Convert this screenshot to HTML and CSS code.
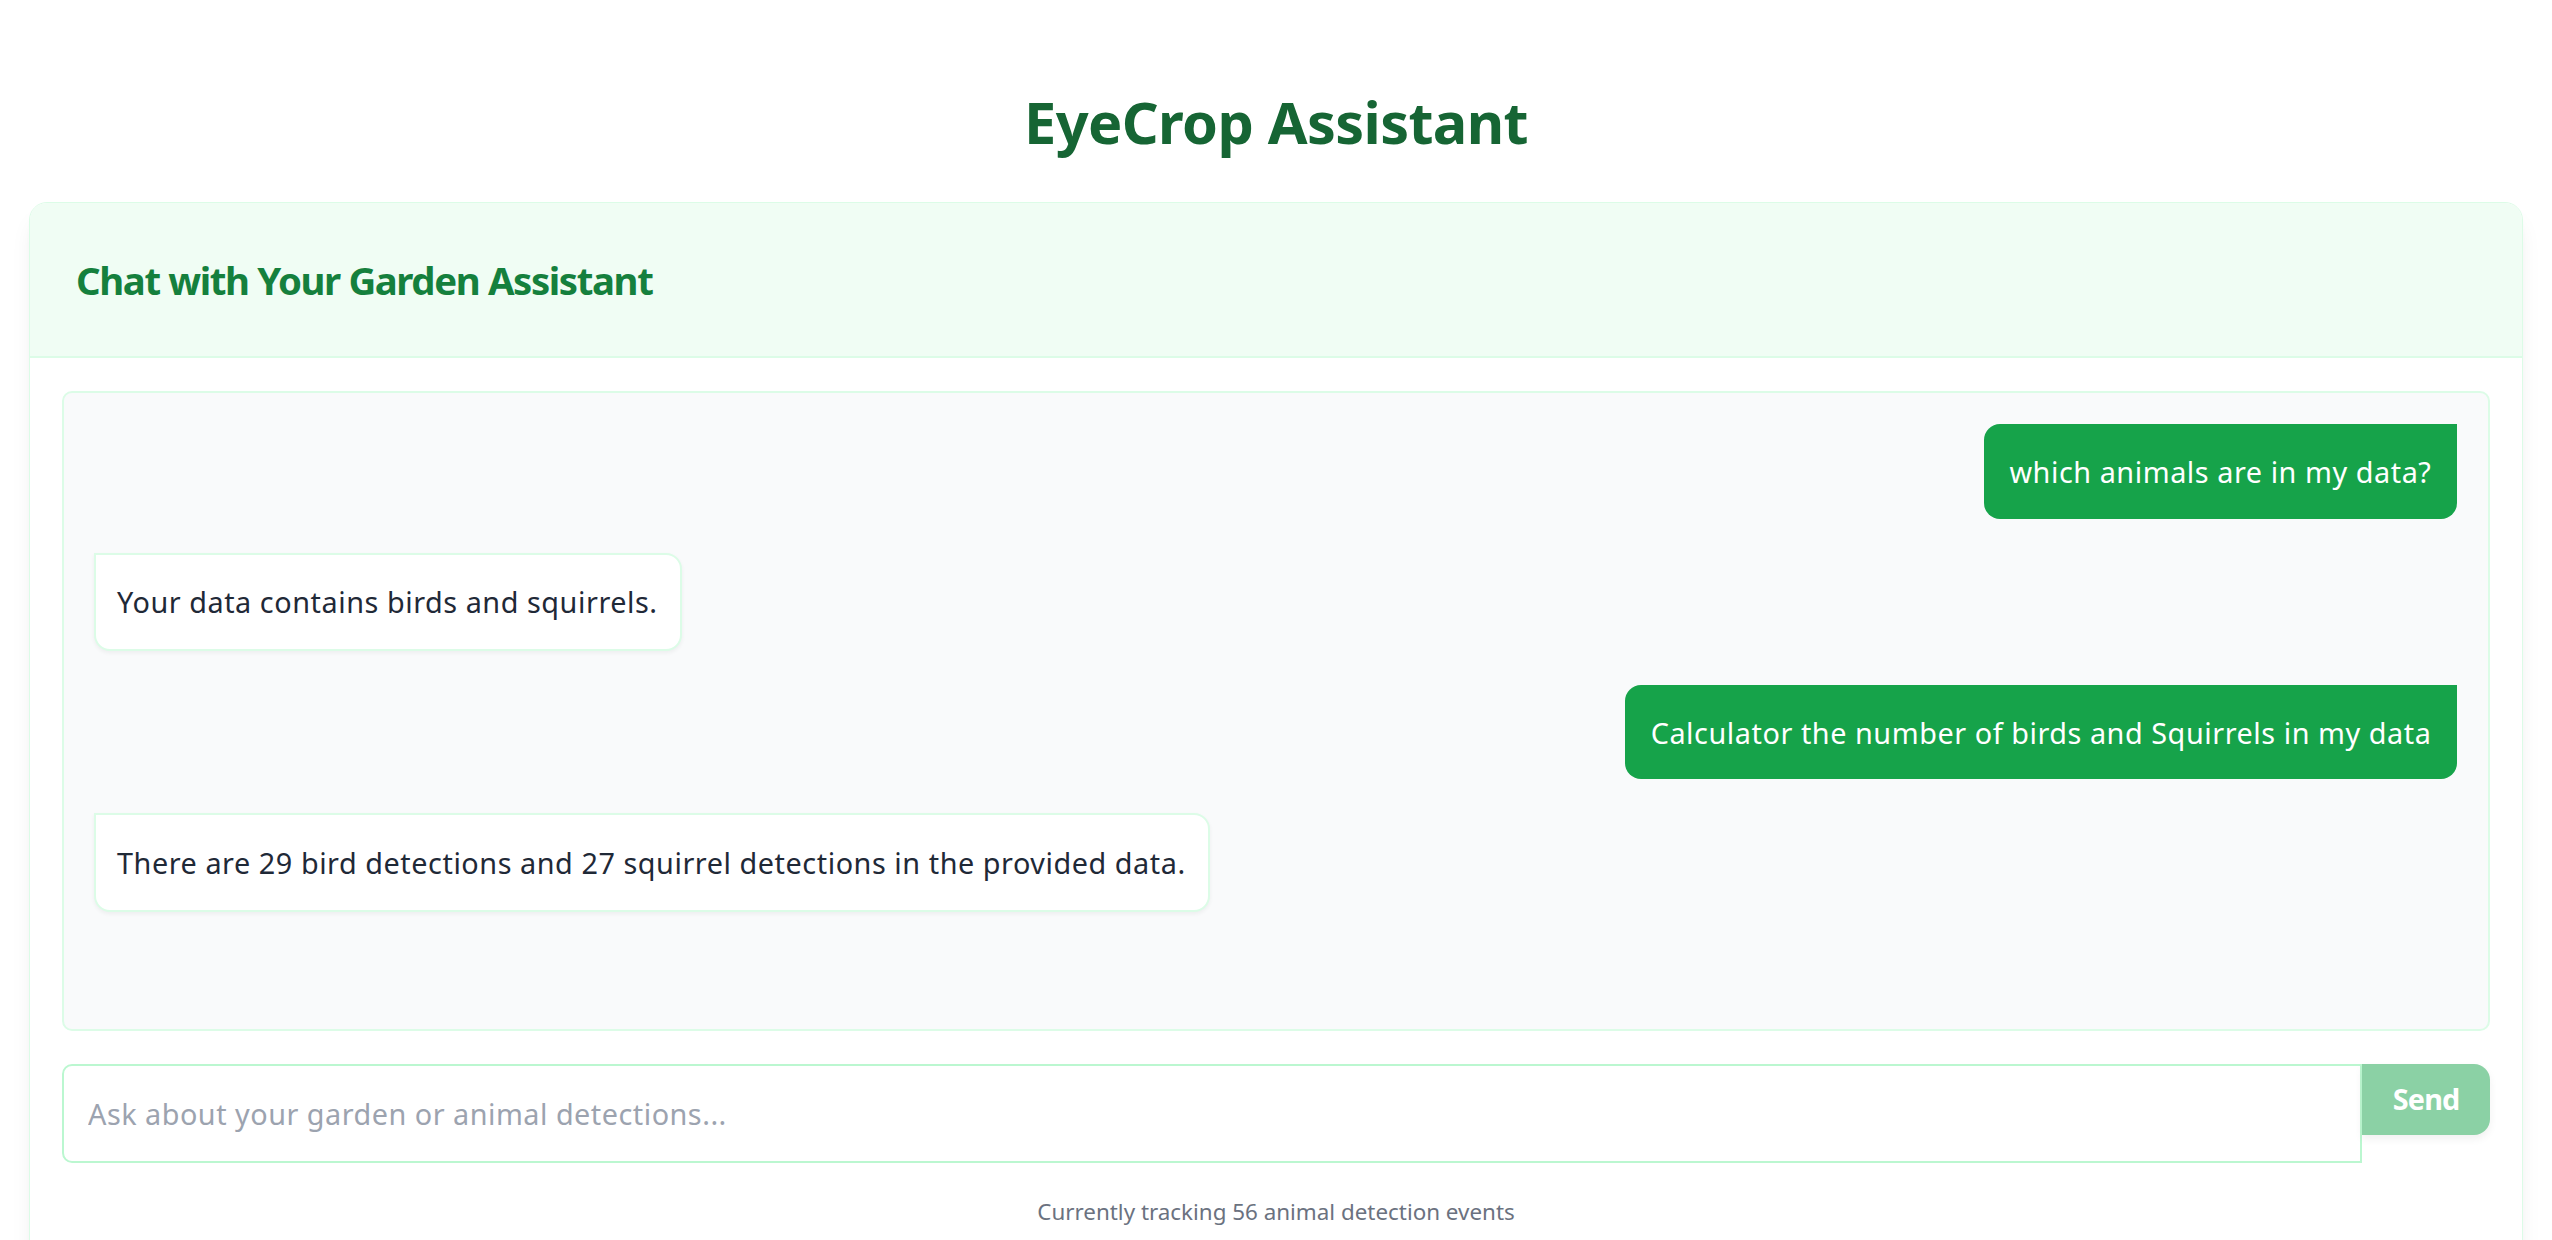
FILE: index.html
```html
<!DOCTYPE html>
<html lang="en">
<head>
<meta charset="utf-8">
<title>EyeCrop Assistant</title>
<link rel="stylesheet" href="styles.css">
</head>
<body>
<div class="page">
  <h1 class="title">EyeCrop Assistant</h1>
  <div class="card">
    <div class="card-header">
      <h2 class="card-title">Chat with Your Garden Assistant</h2>
    </div>
    <div class="card-body">
      <div class="chat">
        <div class="msg msg-user">which animals are in my data?</div>
        <div class="msg msg-bot">Your data contains birds and squirrels.</div>
        <div class="msg msg-user">Calculator the number of birds and Squirrels in my data</div>
        <div class="msg msg-bot">There are 29 bird detections and 27 squirrel detections in the provided data.</div>
      </div>
      <form class="composer">
        <input class="composer-input" type="text" placeholder="Ask about your garden or animal detections...">
        <button class="composer-send" type="button">Send</button>
      </form>
      <p class="status">Currently tracking 56 animal detection events</p>
    </div>
  </div>
</div>
</body>
</html>
```

FILE: styles.css
```css
* { box-sizing: border-box; }

html, body {
  margin: 0;
  padding: 0;
  background: #ffffff;
  font-family: "Noto Sans", "Open Sans", sans-serif;
  color: #1f2937;
}

.page {
  padding: 90px 29px 0;
}

.title {
  margin: 0 0 48px;
  text-align: center;
  font-size: 57.6px;
  line-height: 64px;
  font-weight: 700;
  letter-spacing: -0.6px;
  color: #166534;
}

.card {
  background: #ffffff;
  border: 1px solid #dcfce7;
  border-radius: 18px;
  box-shadow: 0 16px 24px -5px rgba(0, 0, 0, 0.08), 0 6px 10px -6px rgba(0, 0, 0, 0.08);
  overflow: hidden;
}

.card-header {
  background: #f0fdf4;
  border-bottom: 2px solid #dcfce7;
  padding: 52px 46px 50px;
}

.card-title {
  margin: 0;
  font-size: 38.4px;
  line-height: 51.2px;
  font-weight: 700;
  letter-spacing: -1.4px;
  color: #15803d;
}

.card-body {
  padding: 33px 32px 40px;
}

.chat {
  height: 640px;
  background: #f9fafb;
  border: 2px solid #dcfce7;
  border-radius: 10px;
  padding: 31px 31px 31px 30px;
  display: flex;
  flex-direction: column;
  gap: 34px;
  overflow: hidden;
}

.msg {
  max-width: 80%;
  padding: 25.6px;
  font-size: 28.8px;
  line-height: 43.2px;
  letter-spacing: 0.55px;
}

.msg-user {
  align-self: flex-end;
  background: #16a34a;
  color: #ffffff;
  border-radius: 16px 0 16px 16px;
}

.msg-bot {
  align-self: flex-start;
  background: #ffffff;
  color: #1f2937;
  border: 2px solid #dcfce7;
  border-radius: 0 16px 16px 16px;
  padding: 25.6px 22px 25.6px 21px;
  box-shadow: 0 2px 4px rgba(0, 0, 0, 0.05);
}

.composer {
  margin: 33px 0 0;
  display: flex;
  align-items: flex-start;
}

.composer-input {
  flex: 1;
  min-width: 0;
  height: 99px;
  padding: 25.6px 24px;
  border: 2px solid #bbf7d0;
  border-radius: 10px 0 0 10px;
  font-family: inherit;
  font-size: 28.8px;
  line-height: 43.2px;
  letter-spacing: 0.5px;
  color: #1f2937;
  background: #ffffff;
  outline: none;
}

.composer-input::placeholder {
  color: #9ca3af;
}

.composer-send {
  padding: 12.8px 30.5px;
  border: none;
  border-radius: 0 16px 16px 0;
  background: #8bd1a5;
  color: #ffffff;
  font-family: inherit;
  font-size: 28.8px;
  line-height: 44.8px;
  font-weight: 700;
  letter-spacing: -0.8px;
  box-shadow: 0 4px 8px rgba(0, 0, 0, 0.06);
}

.status {
  margin: 33px 0 0;
  text-align: center;
  font-size: 22.4px;
  line-height: 32px;
  color: #6b7280;
}
```
